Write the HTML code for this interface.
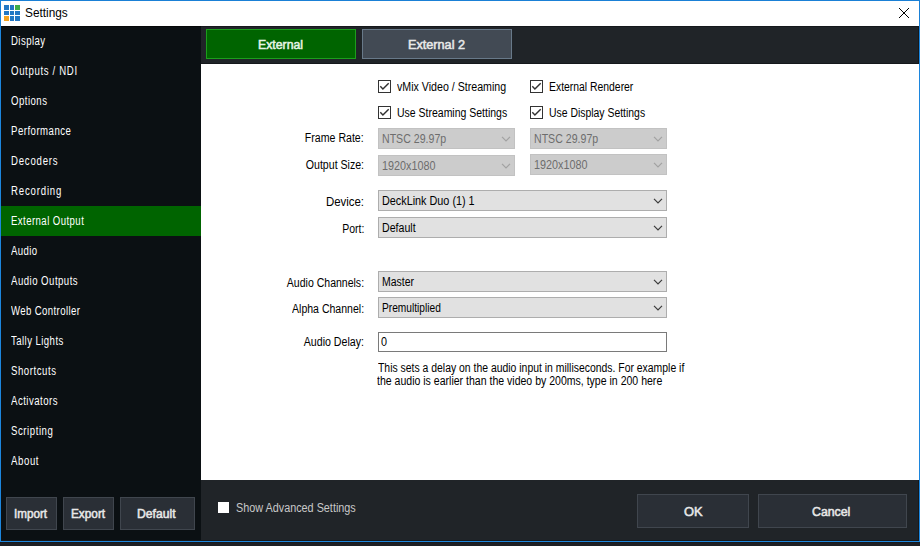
<!DOCTYPE html>
<html><head><meta charset="utf-8">
<style>
*{margin:0;padding:0;box-sizing:border-box}
html,body{width:920px;height:546px;overflow:hidden;background:#1d1f23;font-family:"Liberation Sans",sans-serif}
.a{position:absolute}
.s{position:absolute;white-space:nowrap;line-height:16px;font-size:12px}
.cb{position:absolute;width:13px;height:13px;border:1px solid #333;background:#fff}
.cb svg{position:absolute;left:0px;top:0px}
.combo{position:absolute;height:21px;background:#e1e1e1;border:1px solid #adadad}
.combo.dis{background:#cccccc;border-color:#c2c2c2}
.combo svg{position:absolute;right:3px;top:7px}
.btn{position:absolute;background:#2a2f36;border:1px solid #40464e}
</style></head><body>
<div class="a" style="left:0;top:0;width:920px;height:542px;background:#1c86de"></div>
<div class="a" style="left:0;top:0;width:920px;height:1px;background:#1a80d6"></div>
<div class="a" style="left:0;top:0;width:1px;height:26px;background:#1a80d6"></div>
<div class="a" style="left:919px;top:0;width:1px;height:26px;background:#1a80d6"></div>
<div class="a" style="left:1px;top:1px;width:918px;height:25px;background:#fff"></div>
<div class="a" style="left:4px;top:5px;width:5px;height:5px;background:#2277c4"></div>
<div class="a" style="left:4px;top:11px;width:5px;height:4px;background:#2277c4"></div>
<div class="a" style="left:4px;top:16px;width:5px;height:5px;background:#f5a21e"></div>
<div class="a" style="left:10px;top:5px;width:4px;height:5px;background:#2277c4"></div>
<div class="a" style="left:10px;top:11px;width:4px;height:4px;background:#2277c4"></div>
<div class="a" style="left:10px;top:16px;width:4px;height:5px;background:#2277c4"></div>
<div class="a" style="left:15px;top:5px;width:5px;height:5px;background:#3eae48"></div>
<div class="a" style="left:15px;top:11px;width:5px;height:4px;background:#2277c4"></div>
<div class="a" style="left:15px;top:16px;width:5px;height:5px;background:#2277c4"></div>
<div class="s" style="left:25px;transform-origin:0 0;top:5px;color:#000;font-size:12px;font-weight:normal;transform:scaleX(0.986)">Settings</div>
<svg class="a" style="left:898px;top:7px" width="12" height="12" viewBox="0 0 12 12"><path d="M1 1L11 11M11 1L1 11" stroke="#000" stroke-width="1"/></svg>
<div class="a" style="left:1px;top:26px;width:200px;height:515px;background:#0b1013"></div>
<div class="a" style="left:1px;top:26px;width:200px;height:1px;background:#050708"></div>
<div class="a" style="left:1px;top:206px;width:200px;height:30px;background:#006400"></div>
<div class="s" style="left:11.4px;transform-origin:0 0;top:33px;color:#fff;font-size:12px;font-weight:normal;transform:scaleX(0.8);letter-spacing:0.542px">Display</div>
<div class="s" style="left:11.4px;transform-origin:0 0;top:63px;color:#fff;font-size:12px;font-weight:normal;transform:scaleX(0.8);letter-spacing:0.823px">Outputs / NDI</div>
<div class="s" style="left:11.4px;transform-origin:0 0;top:93px;color:#fff;font-size:12px;font-weight:normal;transform:scaleX(0.8);letter-spacing:0.604px">Options</div>
<div class="s" style="left:11.4px;transform-origin:0 0;top:123px;color:#fff;font-size:12px;font-weight:normal;transform:scaleX(0.8);letter-spacing:0.612px">Performance</div>
<div class="s" style="left:11.4px;transform-origin:0 0;top:153px;color:#fff;font-size:12px;font-weight:normal;transform:scaleX(0.8);letter-spacing:0.982px">Decoders</div>
<div class="s" style="left:11.4px;transform-origin:0 0;top:183px;color:#fff;font-size:12px;font-weight:normal;transform:scaleX(0.8);letter-spacing:1.031px">Recording</div>
<div class="s" style="left:11.4px;transform-origin:0 0;top:213px;color:#fff;font-size:12px;font-weight:normal;transform:scaleX(0.8);letter-spacing:0.545px">External Output</div>
<div class="s" style="left:11.4px;transform-origin:0 0;top:243px;color:#fff;font-size:12px;font-weight:normal;transform:scaleX(0.8);letter-spacing:0.500px">Audio</div>
<div class="s" style="left:11.4px;transform-origin:0 0;top:273px;color:#fff;font-size:12px;font-weight:normal;transform:scaleX(0.8);letter-spacing:0.604px">Audio Outputs</div>
<div class="s" style="left:11.4px;transform-origin:0 0;top:303px;color:#fff;font-size:12px;font-weight:normal;transform:scaleX(0.8);letter-spacing:0.481px">Web Controller</div>
<div class="s" style="left:11.4px;transform-origin:0 0;top:333px;color:#fff;font-size:12px;font-weight:normal;transform:scaleX(0.8);letter-spacing:0.545px">Tally Lights</div>
<div class="s" style="left:11.4px;transform-origin:0 0;top:363px;color:#fff;font-size:12px;font-weight:normal;transform:scaleX(0.8);letter-spacing:0.703px">Shortcuts</div>
<div class="s" style="left:11.4px;transform-origin:0 0;top:393px;color:#fff;font-size:12px;font-weight:normal;transform:scaleX(0.8);letter-spacing:0.611px">Activators</div>
<div class="s" style="left:11.4px;transform-origin:0 0;top:423px;color:#fff;font-size:12px;font-weight:normal;transform:scaleX(0.8);letter-spacing:0.703px">Scripting</div>
<div class="s" style="left:11.4px;transform-origin:0 0;top:453px;color:#fff;font-size:12px;font-weight:normal;transform:scaleX(0.8);letter-spacing:0.750px">About</div>
<div class="btn" style="left:6px;top:497px;width:51px;height:33px"></div>
<div class="btn" style="left:63px;top:497px;width:51px;height:33px"></div>
<div class="btn" style="left:120px;top:497px;width:75px;height:33px"></div>
<div class="s" style="left:14px;transform-origin:0 0;top:506px;color:#e8e8e8;font-size:12px;font-weight:normal;transform:scaleX(0.971);-webkit-text-stroke:0.5px #e8e8e8">Import</div>
<div class="s" style="left:71px;transform-origin:0 0;top:506px;color:#e8e8e8;font-size:12px;font-weight:normal;transform:scaleX(0.983);-webkit-text-stroke:0.5px #e8e8e8">Export</div>
<div class="s" style="left:137px;transform-origin:0 0;top:506px;color:#e8e8e8;font-size:12px;font-weight:normal;transform:scaleX(1.013);-webkit-text-stroke:0.5px #e8e8e8">Default</div>
<div class="a" style="left:201px;top:26px;width:718px;height:38px;background:#202428"></div>
<div class="a" style="left:201px;top:26px;width:718px;height:1px;background:#15181b"></div>
<div class="a" style="left:201px;top:63px;width:718px;height:1px;background:#15181b"></div>
<div class="a" style="left:206px;top:29px;width:150px;height:30px;background:#006400;border:1px solid #1c9e1c"></div>
<div class="a" style="left:362px;top:29px;width:150px;height:30px;background:#424a54;border:1px solid #687989"></div>
<div class="s" style="left:257.5px;transform-origin:0 0;top:37px;color:#e6f5e6;font-size:12px;font-weight:normal;transform:scaleX(1.023);-webkit-text-stroke:0.5px #e6f5e6">External</div>
<div class="s" style="left:408px;transform-origin:0 0;top:37px;color:#e8e8e8;font-size:12px;font-weight:normal;transform:scaleX(1.056);-webkit-text-stroke:0.5px #e8e8e8">External 2</div>
<div class="a" style="left:201px;top:64px;width:718px;height:416px;background:#fff"></div>
<div class="cb" style="left:378px;top:80px"><svg width="11" height="11" viewBox="0 0 11 11"><path d="M1.3 5.3L3.9 7.9L9.7 2.2" fill="none" stroke="#303030" stroke-width="1.45"/></svg></div>
<div class="cb" style="left:378px;top:106px"><svg width="11" height="11" viewBox="0 0 11 11"><path d="M1.3 5.3L3.9 7.9L9.7 2.2" fill="none" stroke="#303030" stroke-width="1.45"/></svg></div>
<div class="cb" style="left:530px;top:80px"><svg width="11" height="11" viewBox="0 0 11 11"><path d="M1.3 5.3L3.9 7.9L9.7 2.2" fill="none" stroke="#303030" stroke-width="1.45"/></svg></div>
<div class="cb" style="left:530px;top:106px"><svg width="11" height="11" viewBox="0 0 11 11"><path d="M1.3 5.3L3.9 7.9L9.7 2.2" fill="none" stroke="#303030" stroke-width="1.45"/></svg></div>
<div class="s" style="left:397px;transform-origin:0 0;top:79px;color:#000;font-size:12px;font-weight:normal;transform:scaleX(0.886)">vMix Video / Streaming</div>
<div class="s" style="left:397px;transform-origin:0 0;top:105px;color:#000;font-size:12px;font-weight:normal;transform:scaleX(0.874)">Use Streaming Settings</div>
<div class="s" style="left:549px;transform-origin:0 0;top:79px;color:#000;font-size:12px;font-weight:normal;transform:scaleX(0.866)">External Renderer</div>
<div class="s" style="left:549px;transform-origin:0 0;top:105px;color:#000;font-size:12px;font-weight:normal;transform:scaleX(0.868)">Use Display Settings</div>
<div class="s" style="right:556px;transform-origin:100% 0;top:130px;color:#000;font-size:12px;font-weight:normal;transform:scaleX(0.882)">Frame Rate:</div>
<div class="s" style="right:556px;transform-origin:100% 0;top:157px;color:#000;font-size:12px;font-weight:normal;transform:scaleX(0.882)">Output Size:</div>
<div class="s" style="right:556px;transform-origin:100% 0;top:194px;color:#000;font-size:12px;font-weight:normal;transform:scaleX(0.953)">Device:</div>
<div class="s" style="right:556px;transform-origin:100% 0;top:221px;color:#000;font-size:12px;font-weight:normal;transform:scaleX(0.875)">Port:</div>
<div class="s" style="right:556px;transform-origin:100% 0;top:275px;color:#000;font-size:12px;font-weight:normal;transform:scaleX(0.877)">Audio Channels:</div>
<div class="s" style="right:556px;transform-origin:100% 0;top:301px;color:#000;font-size:12px;font-weight:normal;transform:scaleX(0.878)">Alpha Channel:</div>
<div class="s" style="right:556px;transform-origin:100% 0;top:334px;color:#000;font-size:12px;font-weight:normal;transform:scaleX(0.887)">Audio Delay:</div>
<div class="combo dis" style="left:378px;top:128px;width:137px"><svg width="10" height="7" viewBox="0 0 10 7"><path d="M1 0.8L5 4.8L9 0.8" fill="none" stroke="#a2a2a2" stroke-width="1.2"/></svg></div>
<div class="s" style="left:382px;transform-origin:0 0;top:131px;color:#6d6d6d;font-size:12px;font-weight:normal;transform:scaleX(0.883)">NTSC 29.97p</div>
<div class="combo dis" style="left:530px;top:128px;width:137px"><svg width="10" height="7" viewBox="0 0 10 7"><path d="M1 0.8L5 4.8L9 0.8" fill="none" stroke="#a2a2a2" stroke-width="1.2"/></svg></div>
<div class="s" style="left:534px;transform-origin:0 0;top:131px;color:#6d6d6d;font-size:12px;font-weight:normal;transform:scaleX(0.883)">NTSC 29.97p</div>
<div class="combo dis" style="left:378px;top:155px;width:137px"><svg width="10" height="7" viewBox="0 0 10 7"><path d="M1 0.8L5 4.8L9 0.8" fill="none" stroke="#a2a2a2" stroke-width="1.2"/></svg></div>
<div class="s" style="left:382px;transform-origin:0 0;top:158px;color:#6d6d6d;font-size:12px;font-weight:normal;transform:scaleX(0.9)">1920x1080</div>
<div class="combo dis" style="left:530px;top:154px;width:137px"><svg width="10" height="7" viewBox="0 0 10 7"><path d="M1 0.8L5 4.8L9 0.8" fill="none" stroke="#a2a2a2" stroke-width="1.2"/></svg></div>
<div class="s" style="left:534px;transform-origin:0 0;top:157px;color:#6d6d6d;font-size:12px;font-weight:normal;transform:scaleX(0.9)">1920x1080</div>
<div class="combo" style="left:378px;top:190px;width:289px"><svg width="10" height="7" viewBox="0 0 10 7"><path d="M1 0.8L5 4.8L9 0.8" fill="none" stroke="#3c3c3c" stroke-width="1.2"/></svg></div>
<div class="s" style="left:382px;transform-origin:0 0;top:193px;color:#000;font-size:12px;font-weight:normal;transform:scaleX(0.902)">DeckLink Duo (1) 1</div>
<div class="combo" style="left:378px;top:217px;width:289px"><svg width="10" height="7" viewBox="0 0 10 7"><path d="M1 0.8L5 4.8L9 0.8" fill="none" stroke="#3c3c3c" stroke-width="1.2"/></svg></div>
<div class="s" style="left:382px;transform-origin:0 0;top:220px;color:#000;font-size:12px;font-weight:normal;transform:scaleX(0.884)">Default</div>
<div class="combo" style="left:378px;top:271px;width:289px"><svg width="10" height="7" viewBox="0 0 10 7"><path d="M1 0.8L5 4.8L9 0.8" fill="none" stroke="#3c3c3c" stroke-width="1.2"/></svg></div>
<div class="s" style="left:382px;transform-origin:0 0;top:274px;color:#000;font-size:12px;font-weight:normal;transform:scaleX(0.872)">Master</div>
<div class="combo" style="left:378px;top:297px;width:289px"><svg width="10" height="7" viewBox="0 0 10 7"><path d="M1 0.8L5 4.8L9 0.8" fill="none" stroke="#3c3c3c" stroke-width="1.2"/></svg></div>
<div class="s" style="left:382px;transform-origin:0 0;top:300px;color:#000;font-size:12px;font-weight:normal;transform:scaleX(0.849)">Premultiplied</div>
<div class="a" style="left:378px;top:332px;width:289px;height:20px;border:1px solid #7a7a7a;background:#fff"></div>
<div class="s" style="left:381px;transform-origin:0 0;top:334px;color:#000;font-size:12px;font-weight:normal;transform:scaleX(0.9)">0</div>
<div class="s" style="left:378px;transform-origin:0 0;top:360px;color:#000;font-size:12px;font-weight:normal;transform:scaleX(0.868)">This sets a delay on the audio input in milliseconds. For example if</div>
<div class="s" style="left:377px;transform-origin:0 0;top:373px;color:#000;font-size:12px;font-weight:normal;transform:scaleX(0.878)">the audio is earlier than the video by 200ms, type in 200 here</div>
<div class="a" style="left:201px;top:480px;width:718px;height:61px;background:#202428"></div>
<div class="a" style="left:218px;top:502px;width:11px;height:11px;background:#fff"></div>
<div class="s" style="left:236px;transform-origin:0 0;top:500px;color:#c8c8c8;font-size:12px;font-weight:normal;transform:scaleX(0.902)">Show Advanced Settings</div>
<div class="btn" style="left:637px;top:494px;width:112px;height:34px"></div>
<div class="btn" style="left:758px;top:494px;width:149px;height:34px"></div>
<div class="s" style="left:684px;transform-origin:0 0;top:504px;color:#e8e8e8;font-size:12px;font-weight:normal;transform:scaleX(1.076);-webkit-text-stroke:0.5px #e8e8e8">OK</div>
<div class="s" style="left:812px;transform-origin:0 0;top:504px;color:#e8e8e8;font-size:12px;font-weight:normal;transform:scaleX(1.027);-webkit-text-stroke:0.5px #e8e8e8">Cancel</div>
<div class="a" style="left:1px;top:540px;width:918px;height:1px;background:#15181a"></div>
<div class="a" style="left:918px;top:26px;width:1px;height:38px;background:#15181a"></div>
<div class="a" style="left:918px;top:480px;width:1px;height:61px;background:#15181a"></div>
<div class="a" style="left:0;top:541px;width:920px;height:1px;background:#1c86de"></div>
<div class="a" style="left:0;top:542px;width:920px;height:1px;background:#18191b"></div>
</body></html>
